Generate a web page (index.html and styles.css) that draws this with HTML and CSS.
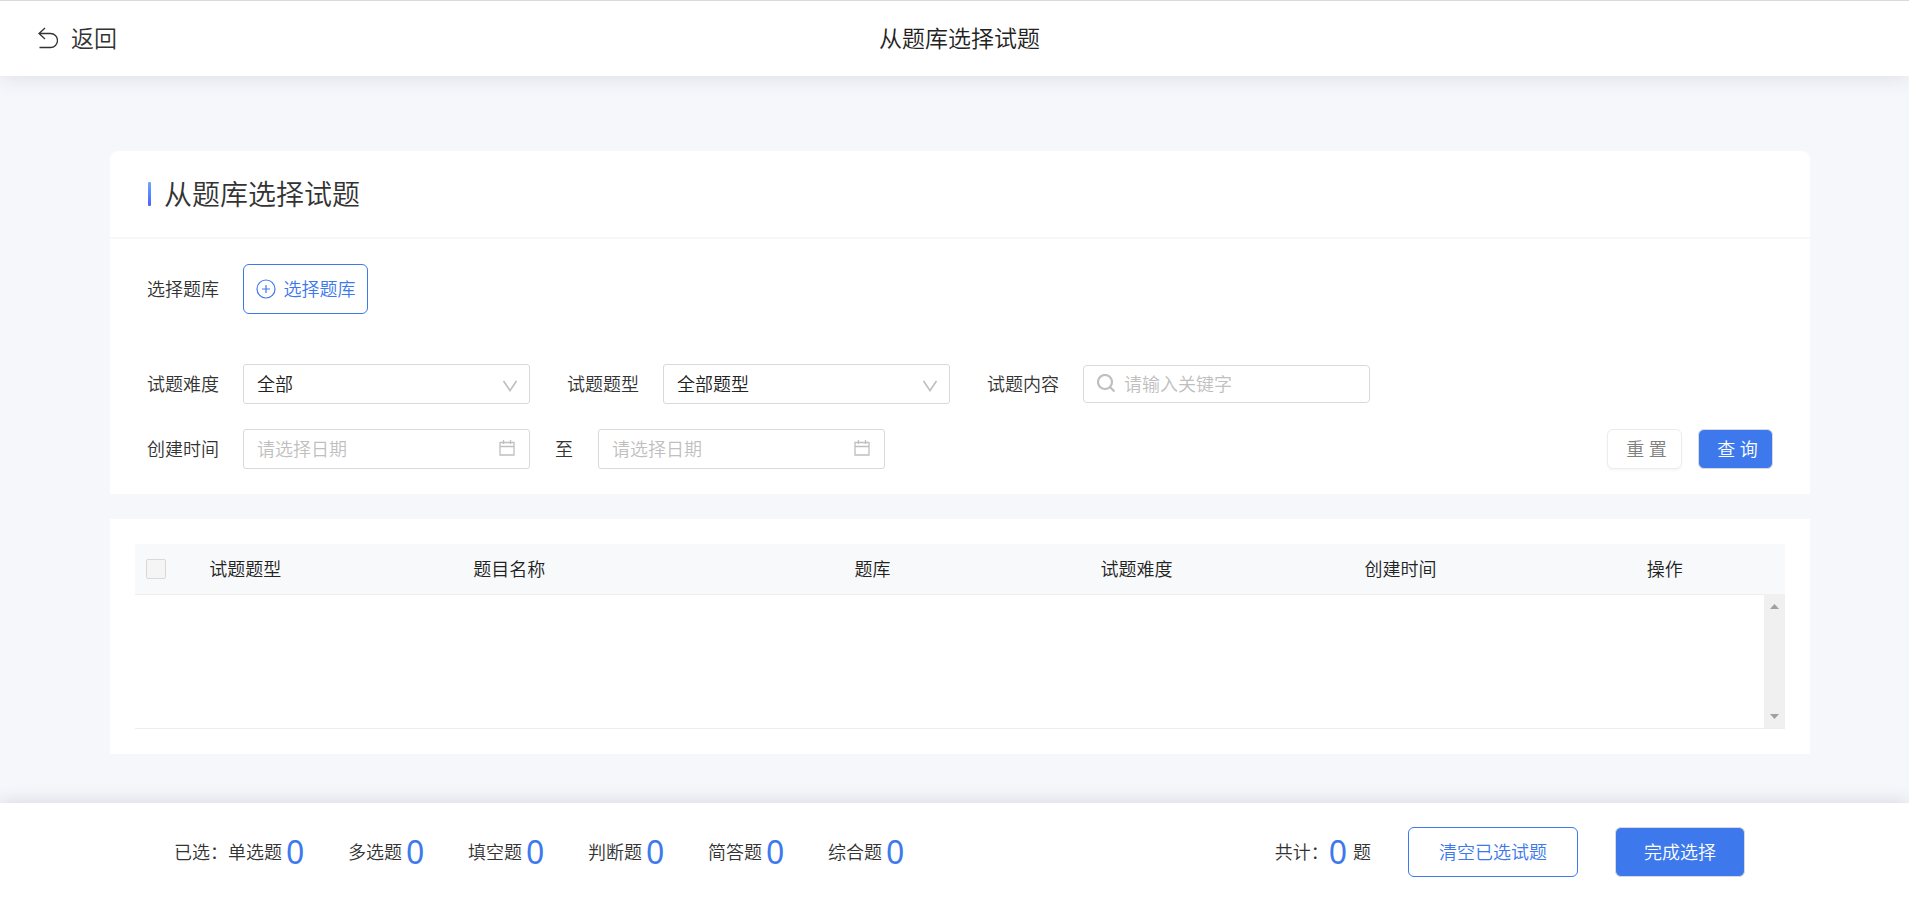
FILE: index.html
```html
<!DOCTYPE html>
<html lang="zh-CN">
<head>
<meta charset="utf-8">
<title>从题库选择试题</title>
<link rel="stylesheet" href="styles.css">
</head>
<body>
<header class="topbar">
  <a class="back" href="#">
    <svg class="back-icon" viewBox="0 0 20 22" aria-hidden="true"><path d="M7 1 1 6.500 7 12M1 6.500h11.500a6.500 6.500 0 0 1 0 14H1.500"/></svg>
    <span>返回</span>
  </a>
  <h1 class="topbar-title">从题库选择试题</h1>
</header>

<main class="main">
  <section class="card filter-card">
    <h2 class="card-title">从题库选择试题</h2>
    <form class="filters">
      <div class="row bank-row">
        <span class="label">选择题库</span>
        <button class="btn btn-outline btn-bank" type="button">
          <svg class="plus-icon" viewBox="0 0 20 20" aria-hidden="true"><circle cx="10" cy="10" r="9"/><path d="M10 6v8M6 10h8"/></svg>
          <span>选择题库</span>
        </button>
      </div>
      <div class="row fields-row">
        <div class="field">
          <label class="label" for="difficulty">试题难度</label>
          <div class="control">
            <select id="difficulty" class="input"><option>全部</option></select>
            <svg class="chevron" viewBox="0 0 14 12" aria-hidden="true"><path d="M0.500 1 7 10.500 13.500 1"/></svg>
          </div>
        </div>
        <div class="field">
          <label class="label" for="type">试题题型</label>
          <div class="control">
            <select id="type" class="input"><option>全部题型</option></select>
            <svg class="chevron" viewBox="0 0 14 12" aria-hidden="true"><path d="M0.500 1 7 10.500 13.500 1"/></svg>
          </div>
        </div>
        <div class="field">
          <label class="label" for="keyword">试题内容</label>
          <div class="control">
            <input id="keyword" class="input input-search" type="text" placeholder="请输入关键字">
            <svg class="search-icon" viewBox="0 0 18 18" aria-hidden="true"><circle cx="8" cy="8" r="7"/><path d="m13 13 4.500 4.500"/></svg>
          </div>
        </div>
      </div>
      <div class="row date-row">
        <label class="label" for="from">创建时间</label>
        <div class="control">
          <input id="from" class="input input-date" type="text" placeholder="请选择日期">
          <svg class="calendar-icon" viewBox="0 0 16 16" aria-hidden="true"><path d="M1 2.500h14v12.500H1zM1 6.500h14M4.500 0v4M11.500 0v4"/></svg>
        </div>
        <label class="to" for="until">至</label>
        <div class="control">
          <input id="until" class="input input-date" type="text" placeholder="请选择日期">
          <svg class="calendar-icon" viewBox="0 0 16 16" aria-hidden="true"><path d="M1 2.500h14v12.500H1zM1 6.500h14M4.500 0v4M11.500 0v4"/></svg>
        </div>
        <div class="actions">
          <button class="btn btn-small btn-plain" type="reset">重 置</button>
          <button class="btn btn-small btn-primary" type="submit">查 询</button>
        </div>
      </div>
    </form>
  </section>

  <section class="card table-card">
    <table class="table">
      <colgroup><col class="c-check"><col class="c-std"><col class="c-name"><col class="c-std"><col class="c-std"><col class="c-std"><col class="c-last"></colgroup>
      <thead>
        <tr>
          <th class="th-check"><input class="check" type="checkbox" aria-label="全选" disabled></th>
          <th class="th-left">试题题型</th>
          <th class="th-left">题目名称</th>
          <th>题库</th>
          <th>试题难度</th>
          <th>创建时间</th>
          <th class="th-last">操作</th>
        </tr>
      </thead>
    </table>
    <div class="table-body">
      <div class="rows"></div>
      <div class="scrollbar" aria-hidden="true">
        <svg class="arrow" viewBox="0 0 9 5"><path d="M0 5 4.500 0 9 5z"/></svg>
        <svg class="arrow" viewBox="0 0 9 5"><path d="M0 0 4.500 5 9 0z"/></svg>
      </div>
    </div>
  </section>
</main>

<footer class="footer">
  <div class="counts">
    <span>已选：</span>
    <ul class="count-list">
      <li class="count">单选题<b class="num">0</b></li>
      <li class="count">多选题<b class="num">0</b></li>
      <li class="count">填空题<b class="num">0</b></li>
      <li class="count">判断题<b class="num">0</b></li>
      <li class="count">简答题<b class="num">0</b></li>
      <li class="count">综合题<b class="num">0</b></li>
    </ul>
  </div>
  <div class="summary">
    <div class="total"><span>共计：</span><b class="num">0</b><span>题</span></div>
    <button class="btn btn-outline btn-clear" type="button">清空已选试题</button>
    <button class="btn btn-primary btn-done" type="button">完成选择</button>
  </div>
</footer>
</body>
</html>
```
FILE: styles.css
```css
* { box-sizing: border-box; }

body {
  margin: 0;
  min-height: 100vh;
  display: flex;
  flex-direction: column;
  background: #f5f7fb;
  color: #333;
  font-family: "Noto Sans", "Noto Sans CJK SC", sans-serif;
  font-weight: 350;
  font-size: 18px;
  line-height: 24px;
}

button, input, select { font: inherit; color: inherit; }

h1, h2, ul { margin: 0; padding: 0; font-weight: inherit; }

svg { fill: none; stroke: currentColor; flex: none; }

/* Top bar */
.topbar {
  display: grid;
  grid-template-columns: 1fr auto 1fr;
  align-items: center;
  height: 76px;
  padding: 0 28px 2px 38px;
  background: #fff;
  border-top: 1px solid #d9dae0;
  box-shadow: 0 2px 20px rgba(60, 60, 90, 0.12);
}

.back {
  display: flex;
  align-items: center;
  gap: 13px;
  color: #333;
  font-size: 23px;
  text-decoration: none;
}

.back-icon { width: 20px; height: 22px; stroke-width: 1.3; }

.topbar-title { color: #222; font-size: 23px; }

/* Cards */
.main { flex: 1; padding: 75px 99px 49px 110px; }

.card { background: #fff; }

.filter-card { border-radius: 8px 8px 0 0; }

.card-title {
  display: flex;
  align-items: center;
  gap: 13px;
  height: 88px;
  padding-left: 38px;
  border-bottom: 2px solid #f5f7fb;
  font-size: 28px;
}

.card-title::before {
  content: "";
  width: 3px;
  height: 24px;
  border-radius: 1px;
  background: linear-gradient(#6ba8ff, #4a63ff);
}

/* Filters */
.filters { padding: 25px 37px; }

.row { display: flex; align-items: center; }

.bank-row { height: 50px; margin-bottom: 50px; }

.fields-row { height: 40px; gap: 37px; margin-bottom: 25px; }

.date-row { height: 40px; }

.field { display: flex; align-items: center; }

.label { width: 96px; flex: none; }

.to { padding: 0 25px; }

.control { position: relative; width: 287px; }

.input {
  display: block;
  width: 100%;
  height: 40px;
  padding: 0 40px 0 13px;
  border: 1px solid #d9d9d9;
  border-radius: 3px;
  background: #fff;
  color: #222;
  appearance: none;
  outline: none;
}

.input::placeholder { color: #bfbfbf; opacity: 1; }

.input-search { height: 38px; padding: 0 14px 0 40px; border-radius: 4px; }

.chevron, .calendar-icon, .search-icon {
  position: absolute;
  color: #bfbfbf;
  pointer-events: none;
}

.chevron { right: 13px; top: 16px; width: 14px; height: 12px; stroke-width: 1.6; }

.calendar-icon { right: 15px; top: 11px; width: 16px; height: 16px; stroke-width: 1.3; }

.search-icon { left: 14px; top: 9px; width: 18px; height: 18px; stroke-width: 2.2; }

.actions { display: flex; gap: 16px; margin-left: auto; }

/* Buttons */
.btn {
  display: flex;
  align-items: center;
  justify-content: center;
  height: 50px;
  padding: 0;
  border: 1px solid #d9d9d9;
  border-radius: 6px;
  background: #fff;
  white-space: nowrap;
}

.btn-outline { border-color: #3d79ec; color: #3d79ec; }

.btn-primary { background: #3d79ec; color: #fff; }

.btn-plain {
  border-color: #ececec;
  color: #808080;
  box-shadow: 0 2px 2px rgba(0, 0, 0, 0.03);
}

.btn-small { width: 75px; height: 40px; padding-left: 4px; }

.btn-bank { width: 125px; gap: 8px; }

.plus-icon { width: 20px; height: 20px; stroke-width: 1.2; }

.btn-clear { width: 170px; }

.btn-done { width: 130px; }

/* Table */
.table-card { margin-top: 25px; padding: 25px; }

.table {
  width: 100%;
  table-layout: fixed;
  border-collapse: collapse;
  background: #f8f9fb;
  color: #222;
}

.c-check { width: 4.5%; }
.c-std { width: 16%; }
.c-name { width: 16.2%; }
.c-last { width: 15.3%; }

.table th { height: 50px; padding: 0; font-weight: inherit; text-align: center; }
.table .th-left { text-align: left; }
.table .th-last { padding-left: 12px; }
.table .th-check { padding-left: 11px; text-align: left; }

.check {
  display: block;
  width: 20px;
  height: 20px;
  margin: 0;
  border: 1px solid #d9d9d9;
  border-radius: 2px;
  background: #f5f5f5;
  appearance: none;
}

.table-body { display: flex; height: 135px; border-bottom: 1px solid #eee; }

.rows { flex: 1; border-top: 1px solid #eee; }

.scrollbar {
  display: flex;
  flex-direction: column;
  justify-content: space-between;
  align-items: center;
  width: 21px;
  padding: 10px 0 9px;
  background: #f0f0f0;
  color: #a0a0a0;
}

.arrow { width: 9px; height: 5px; fill: currentColor; stroke: none; }

/* Footer */
.footer {
  display: flex;
  align-items: center;
  justify-content: space-between;
  height: 94px;
  padding: 4px 164px 0 174px;
  background: #fff;
  box-shadow: 0 -2px 16px rgba(60, 50, 70, 0.14);
}

.counts, .count-list, .count, .summary, .total { display: flex; align-items: center; }

.count-list { gap: 43px; list-style: none; }

.num {
  padding-left: 4px;
  color: #3d79ec;
  font-size: 32px;
  font-weight: 400;
}

.count-list .count { min-width: 77px; }

.summary { gap: 37px; }

.total .num { padding: 0 6px 0 0; }
```
